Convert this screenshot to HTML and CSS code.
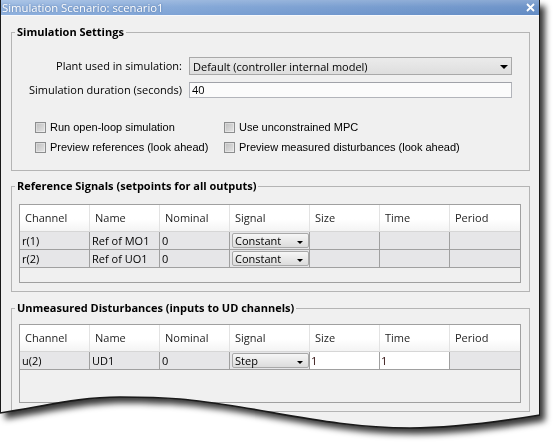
FILE: index.html
```html
<!DOCTYPE html>
<html>
<head>
<meta charset="utf-8">
<title>Simulation Scenario</title>
<link rel="stylesheet" href="styles.css">
</head>
<body>
<div class="shadow">
  <div class="win">
    <div class="titlebar">
      <span class="title">Simulation Scenario: scenario1</span>
      <svg class="close" width="9" height="9" viewBox="0 0 9 9"><path d="M1 1L8 8M8 1L1 8" stroke="#fff" stroke-width="1.8" fill="none"/></svg>
    </div>
    <div class="content">
      <fieldset class="group g1">
        <legend>Simulation Settings</legend>
        <div class="inner">
          <div class="form">
            <span class="lbl">Plant used in simulation:</span>
            <div class="combo wide"><span>Default (controller internal model)</span><i class="tri big"></i></div>
            <span class="lbl">Simulation duration (seconds)</span>
            <div class="input">40</div>
          </div>
          <div class="checks">
            <label class="chk"><span class="box"></span>Run open-loop simulation</label>
            <label class="chk"><span class="box"></span>Use unconstrained MPC</label>
            <label class="chk"><span class="box"></span>Preview references (look ahead)</label>
            <label class="chk"><span class="box"></span>Preview measured disturbances (look ahead)</label>
          </div>
        </div>
      </fieldset>

      <fieldset class="group g2">
        <legend>Reference Signals (setpoints for all outputs)</legend>
        <div class="inner">
          <div class="table">
            <div class="th">Channel</div><div class="th">Name</div><div class="th">Nominal</div><div class="th">Signal</div><div class="th">Size</div><div class="th">Time</div><div class="th last">Period</div>
            <div class="td">r(1)</div><div class="td">Ref of MO1</div><div class="td">0</div><div class="td sig"><div class="combo cell"><span>Constant</span><i class="tri small"></i></div></div><div class="td"></div><div class="td"></div><div class="td last"></div>
            <div class="td">r(2)</div><div class="td">Ref of UO1</div><div class="td">0</div><div class="td sig"><div class="combo cell"><span>Constant</span><i class="tri small"></i></div></div><div class="td"></div><div class="td"></div><div class="td last"></div>
          </div>
        </div>
      </fieldset>

      <fieldset class="group g3">
        <legend>Unmeasured Disturbances (inputs to UD channels)</legend>
        <div class="inner">
          <div class="table">
            <div class="th">Channel</div><div class="th">Name</div><div class="th">Nominal</div><div class="th">Signal</div><div class="th">Size</div><div class="th">Time</div><div class="th last">Period</div>
            <div class="td">u(2)</div><div class="td">UD1</div><div class="td">0</div><div class="td sig"><div class="combo cell"><span>Step</span><i class="tri small"></i></div></div><div class="td edit">1</div><div class="td edit">1</div><div class="td last"></div>
          </div>
        </div>
      </fieldset>
    </div>
  </div>
</div>
<svg class="tear" width="555" height="448" viewBox="0 0 555 448">
  <path d="M0 413 C50 405 80 397 120 397 C170 397 190 399 240 407 C300 417 350 428 410 428 C460 428 510 420 540 415" fill="none" stroke="#1a1a1a" stroke-width="1.7"/>
</svg>
</body>
</html>
```

FILE: styles.css
```css
html, body {
  margin: 0;
  padding: 0;
}
body {
  width: 555px;
  height: 448px;
  overflow: hidden;
  background: #ffffff;
  position: relative;
  font-family: "Open Sans", "Noto Sans", sans-serif;
  font-size: 11px;
  color: #000;
}

.shadow {
  width: 540px;
  filter: drop-shadow(5px 6px 3px rgba(0, 0, 0, 0.78));
}

.win {
  width: 540px;
  height: 440px;
  box-sizing: border-box;
  background: #f0f0f0;
  border-left: 1px solid #1a1a1a;
  border-right: 1px solid #1a1a1a;
  clip-path: path('M0 0 H540 V415 C510 420 460 428 410 428 C350 428 300 417 240 407 C190 399 170 397 120 397 C80 397 50 405 0 413 Z');
}

.titlebar {
  height: 15px;
  border-bottom: 1px solid #f7f9fc;
  display: flex;
  align-items: center;
  justify-content: space-between;
  padding: 0 4px 0 1px;
  color: #fff;
  font-size: 11.3px;
  line-height: 15px;
  background:
    linear-gradient(180deg, rgba(255,255,255,0.25) 0, rgba(255,255,255,0.08) 45%, rgba(255,255,255,0) 100%),
    linear-gradient(90deg, #8fb1de 0, #7aa0d3 40%, #628bc4 100%);
}
.title {
  text-shadow: 0 0 2px rgba(30, 60, 110, 0.5);
}
.close {
  display: block;
}

.content {
  padding: 9px 9px 0 10px;
}

.group {
  margin: 0;
  padding: 0;
  border: 1px solid #b4b4b4;
  min-inline-size: 0;
}
.group legend {
  margin-left: 3px;
  padding: 0 2px;
  font-weight: 700;
  font-size: 11px;
  line-height: 14px;
}

.g1 .inner {
  padding: 18px 16px 13px 0;
}
.form {
  display: grid;
  grid-template-columns: 170px 323px;
  column-gap: 7px;
  row-gap: 7px;
  align-items: center;
}
.lbl {
  text-align: right;
  line-height: 14px;
}
.combo {
  display: flex;
  align-items: center;
  box-sizing: border-box;
}
.combo.wide {
  height: 18px;
  border: 1px solid #a9a9a9;
  background: linear-gradient(#ebebeb, #dedede);
  padding-left: 3px;
}
.tri {
  width: 0;
  height: 0;
  margin-left: auto;
  border-style: solid;
  border-color: #000 transparent transparent transparent;
}
.tri.big {
  border-width: 4px 4px 0 4px;
  margin-right: 3px;
  margin-top: 1px;
}
.input {
  height: 16px;
  box-sizing: border-box;
  border: 1px solid #b2b4ba;
  border-top-color: #a0a2a8;
  background: #fbfbfb;
  padding-left: 2px;
  line-height: 14px;
}

.checks {
  margin-top: 19px;
  padding-left: 23px;
  display: grid;
  grid-template-columns: 189px auto;
  grid-auto-rows: 20px;
}
.chk {
  display: flex;
  align-items: center;
  font-family: "Liberation Sans", Arial, sans-serif;
  font-size: 11px;
}
.box {
  width: 11px;
  height: 11px;
  box-sizing: border-box;
  border: 1px solid #8c8d8e;
  background: linear-gradient(135deg, #bdbdbd, #e6e6e6);
  box-shadow: inset 0 0 0 1px rgba(255,255,255,0.35);
  margin-right: 4px;
}

.g2 {
  margin-top: 8px;
}
.g2 .inner {
  padding: 11px 8px 8px 7px;
}
.g3 {
  margin-top: 9px;
}
.g3 .inner {
  padding: 9px 8px 8px 7px;
}

.table {
  width: 502px;
  height: 79px;
  box-sizing: border-box;
  border: 1px solid #a0a0a0;
  background: #f0f0f0;
  display: grid;
  grid-template-columns: 70px 70px 70px 80px 70px 70px 70px;
  grid-template-rows: 27px 18px 18px;
  align-content: start;
}
.th {
  box-sizing: border-box;
  border-right: 1px solid #e3e3e3;
  border-bottom: 1px solid #d6d6d6;
  background: linear-gradient(#ffffff 0, #ffffff 55%, #f4f4f4 100%);
  padding: 5px 0 0 5px;
  line-height: 16px;
  color: #1e1e1e;
}
.td {
  box-sizing: border-box;
  border-right: 1px solid #a0a0a0;
  border-bottom: 1px solid #a0a0a0;
  background: #e6e6e8;
  padding-left: 2px;
  line-height: 17px;
  white-space: nowrap;
}
.th.last, .td.last {
  border-right: none;
}
.td.sig {
  padding: 0;
}
.td.edit {
  background: #ffffff;
  padding-left: 1px;
  color: #2a0606;
}
.combo.cell {
  margin: 1px 0 0 2px;
  height: 15px;
  border: 1px solid #a9a9a9;
  border-radius: 2px;
  background: linear-gradient(#f6f6f6, #dcdcdc);
  padding-left: 2px;
  line-height: 13px;
}
.tri.small {
  border-width: 3px 3px 0 3px;
  margin-right: 5px;
  align-self: flex-end;
  margin-bottom: 3px;
}

.tear {
  position: absolute;
  left: 0;
  top: 0;
  pointer-events: none;
}
```
